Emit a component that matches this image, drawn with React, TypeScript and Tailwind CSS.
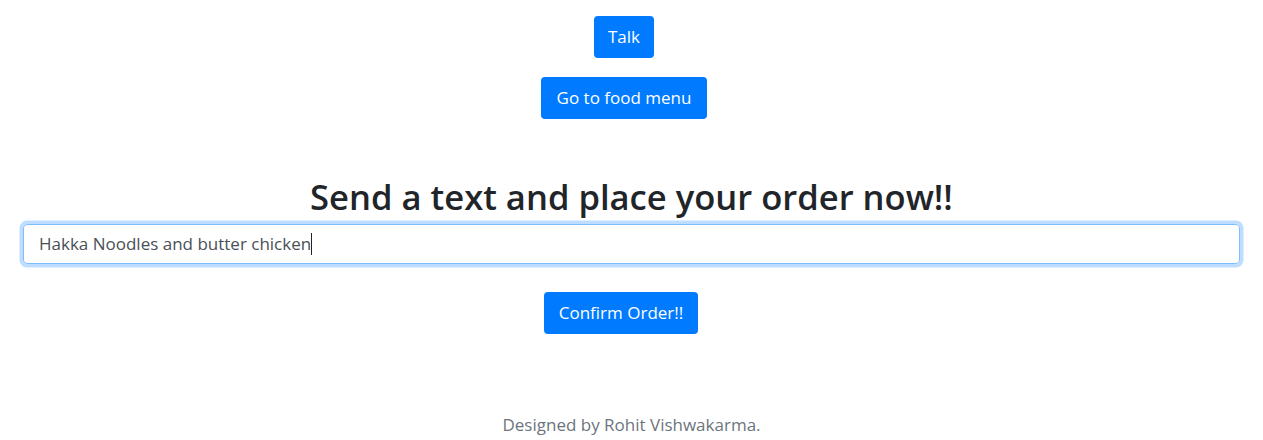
import React from 'react';

const btn =
  'h-[42px] rounded-[4px] bg-[#007bff] text-white text-[17px] leading-[26px] flex items-center justify-center';

export default function App() {
  return (
    <div className="min-h-[440px] bg-white font-['Open_Sans',sans-serif] flex flex-col items-center pt-4">
      <button className={`${btn} w-[60px] mr-[15px]`}>Talk</button>
      <button className={`${btn} w-[166px] mt-[19px] mr-[15px]`}>Go to food menu</button>

      <h1 className="mt-[51px] h-[54px] leading-[54px] text-[34.6px] font-semibold text-[#212529]">
        Send a text and place your order now!!
      </h1>

      <div className="self-stretch mx-[23px] h-[40px] rounded-[4px] border border-[#80bdff] ring-[3.5px] ring-[#007bff]/25 flex items-center px-[15px] text-[17px] text-[#495057]">
        <span>Hakka Noodles and butter chicken</span>
        <span className="w-px h-[22px] bg-[#212529]" />
      </div>

      <button className={`${btn} w-[154px] mt-[28px] mr-[21px]`}>Confirm Order!!</button>

      <footer className="mt-[78px] text-[17px] leading-[26px] text-[#6c757d]">
        Designed by Rohit Vishwakarma.
      </footer>
    </div>
  );
}
